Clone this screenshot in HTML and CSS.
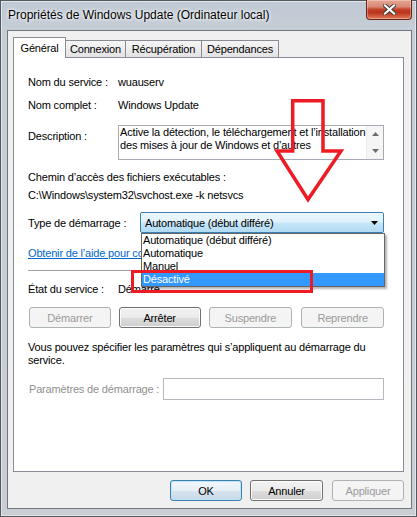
FILE: index.html
```html
<!DOCTYPE html>
<html lang="fr">
<head>
<meta charset="utf-8">
<title>Propriétés de Windows Update (Ordinateur local)</title>
<link rel="stylesheet" href="styles.css">
</head>
<body>
<div class="window">
  <div class="titlebar">
    <span class="title">Propriétés de Windows Update (Ordinateur local)</span>
    <div class="close">
      <svg width="13" height="11" viewBox="0 0 13 11"><path d="M2 1.5 L11 9.5 M11 1.5 L2 9.5" stroke="#3b3b3b" stroke-width="4" stroke-linecap="square" fill="none"/><path d="M2 1.5 L11 9.5 M11 1.5 L2 9.5" stroke="#ffffff" stroke-width="2.2" stroke-linecap="square" fill="none"/></svg>
    </div>
  </div>
  <div class="client">
    <div class="tabs">
      <div class="tab active">Général</div>
      <div class="tab tab-conn">Connexion</div>
      <div class="tab tab-recup">Récupération</div>
      <div class="tab tab-dep">Dépendances</div>
    </div>
    <div class="panel">
      <div class="row r1"><span class="lbl">Nom du service :</span><span>wuauserv</span></div>
      <div class="row r2"><span class="lbl">Nom complet :</span><span>Windows Update</span></div>
      <div class="row r3">
        <span class="lbl lbl-desc">Description :</span>
        <div class="textbox">
          <div class="tb-text">Active la détection, le téléchargement et l’installation<br>des mises à jour de Windows et d’autres</div>
          <div class="vscroll">
            <div class="sbtn"><svg width="7" height="4" viewBox="0 0 7 4"><polygon points="3.5,0 7,4 0,4" fill="#6d6d6d"/></svg></div>
            <div class="sbtn"><svg width="7" height="4" viewBox="0 0 7 4"><polygon points="0,0 7,0 3.5,4" fill="#6d6d6d"/></svg></div>
          </div>
        </div>
      </div>
      <div class="line r4">Chemin d’accès des fichiers exécutables :</div>
      <div class="line r5">C:\Windows\system32\svchost.exe -k netsvcs</div>
      <div class="row r6">
        <span class="lbl-type">Type de démarrage :</span>
        <div class="combo">
          <span>Automatique (début différé)</span>
          <svg class="carrow" width="7" height="4" viewBox="0 0 7 4"><polygon points="0,0 7,0 3.5,4" fill="#000"/></svg>
          <ul class="dropdown">
            <li>Automatique (début différé)</li>
            <li>Automatique</li>
            <li>Manuel</li>
            <li class="sel">Désactivé</li>
          </ul>
        </div>
      </div>
      <a class="link" href="#">Obtenir de l’aide pour configurer les options de démarrage du service.</a>
      <div class="sep"></div>
      <div class="row r8"><span class="lbl">État du service :</span><span>Démarré</span></div>
      <div class="btnrow">
        <button class="btn disabled b1">Démarrer</button>
        <button class="btn b2">Arrêter</button>
        <button class="btn disabled b3">Suspendre</button>
        <button class="btn disabled b4">Reprendre</button>
      </div>
      <p class="para">Vous pouvez spécifier les paramètres qui s’appliquent au démarrage du<br>service.</p>
      <div class="row r11">
        <span class="lbl-param">Paramètres de démarrage :</span>
        <div class="input"></div>
      </div>
    </div>
    <div class="footer">
      <button class="btn default f-ok">OK</button>
      <button class="btn f-cancel">Annuler</button>
      <button class="btn disabled f-apply">Appliquer</button>
    </div>
  </div>

  <svg class="annot-arrow" width="80" height="112" viewBox="270 95 80 112">
    <polygon points="292.7,100.8 323,100.8 323,151 341,151 308,199.5 277,151 292.7,151" fill="none" stroke="#ed1c24" stroke-width="3.5" stroke-linejoin="miter"/>
  </svg>
  <div class="annot-box"></div>
</div>
</body>
</html>
```

FILE: styles.css
```css
* { box-sizing: border-box; }

html, body {
  margin: 0;
  padding: 0;
}

body {
  width: 417px;
  height: 517px;
  overflow: hidden;
  font-family: "Liberation Sans", Arial, sans-serif;
  font-size: 11px;
  letter-spacing: -0.17px;
  color: #000;
  background: #ffffff;
}

.window {
  position: relative;
  width: 417px;
  height: 517px;
  display: flex;
  flex-direction: column;
  padding: 0 5px 8px 7px;
  background: linear-gradient(180deg, #c0c9d4 0px, #c5cdd6 30px, #c9ced4 100%);
  box-shadow: inset 0 0 0 1px #55595e, inset 0 0 0 2px #e2e6ea;
}

/* Title bar */
.titlebar {
  height: 30px;
  display: flex;
  align-items: flex-start;
  flex: none;
}

.title {
  margin-top: 8px;
  padding-left: 1px;
  font-size: 12px;
  line-height: 15px;
  letter-spacing: 0;
  text-shadow: 0 0 5px #fff, 0 0 3px #fff;
}

.close {
  margin-left: auto;
  width: 46px;
  height: 20px;
  border: 1px solid #6a2619;
  border-top: none;
  border-radius: 0 0 4px 4px;
  background: linear-gradient(180deg, #e6a592 0%, #d98a74 35%, #c2422a 50%, #b9331c 65%, #cf5a3c 85%, #e07d5c 100%);
  box-shadow: inset 0 0 0 1px rgba(255, 255, 255, 0.3);
  display: flex;
  align-items: center;
  justify-content: center;
  padding-bottom: 1px;
}

/* Client area */
.client {
  flex: 1;
  border: 1px solid #72767b;
  background: #f0f0f0;
  padding: 6px 7px 7px 5px;
  display: flex;
  flex-direction: column;
}

.tabs {
  display: flex;
  align-items: flex-end;
  height: 20px;
  flex: none;
}

.tab {
  height: 17px;
  margin-left: -1px;
  border: 1px solid #898c95;
  border-bottom: none;
  background: linear-gradient(180deg, #f5f5f5 0%, #ececec 50%, #e3e3e3 100%);
  display: flex;
  align-items: center;
  justify-content: center;
  white-space: nowrap;
}

.tab.active {
  position: relative;
  z-index: 1;
  width: 53px;
  height: 21px;
  margin-left: 0;
  margin-bottom: -1px;
  background: #ffffff;
}

.tab-conn { width: 61px; }
.tab-recup { width: 77px; }
.tab-dep { width: 78px; }

.panel {
  height: 415px;
  flex: none;
  border: 1px solid #898c95;
  background: #ffffff;
  padding: 17px 19px 0 14px;
  display: flex;
  flex-direction: column;
}

.row {
  display: flex;
  align-items: center;
  line-height: 14px;
}

.line {
  line-height: 14px;
  white-space: nowrap;
}

.lbl {
  width: 90px;
  flex: none;
}

.r2 { margin-top: 9px; }

.r3 {
  margin-top: 13px;
  align-items: flex-start;
}

.lbl-desc { margin-top: 4px; }

.textbox {
  width: 266px;
  height: 35px;
  border: 1px solid #a6abb3;
  background: #ffffff;
  display: flex;
}

.tb-text {
  flex: 1;
  padding-left: 1px;
  line-height: 13px;
  white-space: nowrap;
  overflow: hidden;
}

.vscroll {
  width: 17px;
  flex: none;
  background: #f5f5f5;
  border-left: 1px solid #ebebeb;
  display: flex;
  flex-direction: column;
}

.sbtn {
  flex: 1;
  display: flex;
  align-items: center;
  justify-content: center;
}

.r4 { margin-top: 10px; }
.r5 { margin-top: 4px; }

.r6 { margin-top: 10px; }

.lbl-type {
  width: 112px;
  flex: none;
}

.combo {
  position: relative;
  width: 245px;
  height: 21px;
  border: 1px solid #3c7fb1;
  border-radius: 2px;
  background: linear-gradient(180deg, #edf7fd 0%, #dff1fc 48%, #c6e6f8 52%, #b1dbf3 100%);
  display: flex;
  align-items: center;
  padding-left: 4px;
}

.carrow {
  margin-left: auto;
  margin-right: 5px;
}

.dropdown {
  position: absolute;
  z-index: 5;
  top: 20px;
  left: 0;
  width: 244px;
  margin: 0;
  padding: 0;
  list-style: none;
  border: 1px solid #646464;
  background: #ffffff;
  box-shadow: 2px 2px 2px rgba(0, 0, 0, 0.3);
}

.dropdown li {
  height: 13px;
  line-height: 13px;
  padding-left: 1px;
  white-space: nowrap;
}

.dropdown li.sel {
  background: #3399ff;
  color: #ffffff;
}

/* the open list lies over the end of the link, as in the reference */
.link {
  margin-top: 13px;
  align-self: flex-start;
  line-height: 14px;
  color: #0066cc;
  text-decoration: underline;
  white-space: nowrap;
}

.sep {
  margin-top: 10px;
  height: 1px;
  background: #a0a0a0;
}

.r8 { margin-top: 11px; }

.btn {
  height: 21px;
  padding: 0;
  margin: 0;
  font: inherit;
  letter-spacing: inherit;
  color: #000;
  border: 1px solid #707070;
  border-radius: 3px;
  background: linear-gradient(180deg, #f2f2f2 0%, #ebebeb 50%, #dddddd 51%, #cfcfcf 100%);
  box-shadow: inset 0 0 0 1px #fbfbfb;
  display: flex;
  align-items: center;
  justify-content: center;
}

.btn.disabled {
  color: #9a9a9a;
  border-color: #adb2b5;
  background: #f4f4f4;
  box-shadow: none;
}

.btn.default {
  border-color: #3c7fb1;
  background: linear-gradient(180deg, #f2f7fb 0%, #e6eff6 50%, #d6e4ee 51%, #c8dae8 100%);
  box-shadow: inset 0 0 0 1px #bfe6f8;
}

.btnrow {
  margin-top: 11px;
  margin-left: 1px;
  display: flex;
}

.b1 { width: 82px; }
.b2 { width: 82px; margin-left: 8px; }
.b3 { width: 84px; margin-left: 8px; }
.b4 { width: 83px; margin-left: 9px; }

.para {
  margin: 13px 0 0 0;
  line-height: 13px;
}

.r11 { margin-top: 11px; }

.lbl-param {
  width: 134px;
  flex: none;
  margin-left: 1px;
  color: #8f8f8f;
}

.input {
  width: 222px;
  height: 22px;
  border: 1px solid #b5b9bf;
  background: #ffffff;
}

.footer {
  margin-top: 8px;
  height: 21px;
  flex: none;
  display: flex;
  justify-content: flex-end;
}

.f-ok { width: 72px; }
.f-cancel { width: 73px; margin-left: 8px; }
.f-apply { width: 72px; margin-left: 9px; }

/* Red annotations drawn over the dialog */
.annot-arrow {
  position: absolute;
  left: 270px;
  top: 95px;
  z-index: 10;
}

.annot-box {
  position: absolute;
  left: 131px;
  top: 270px;
  width: 182px;
  height: 23px;
  border: 3px solid #ed1c24;
  z-index: 10;
}
```
